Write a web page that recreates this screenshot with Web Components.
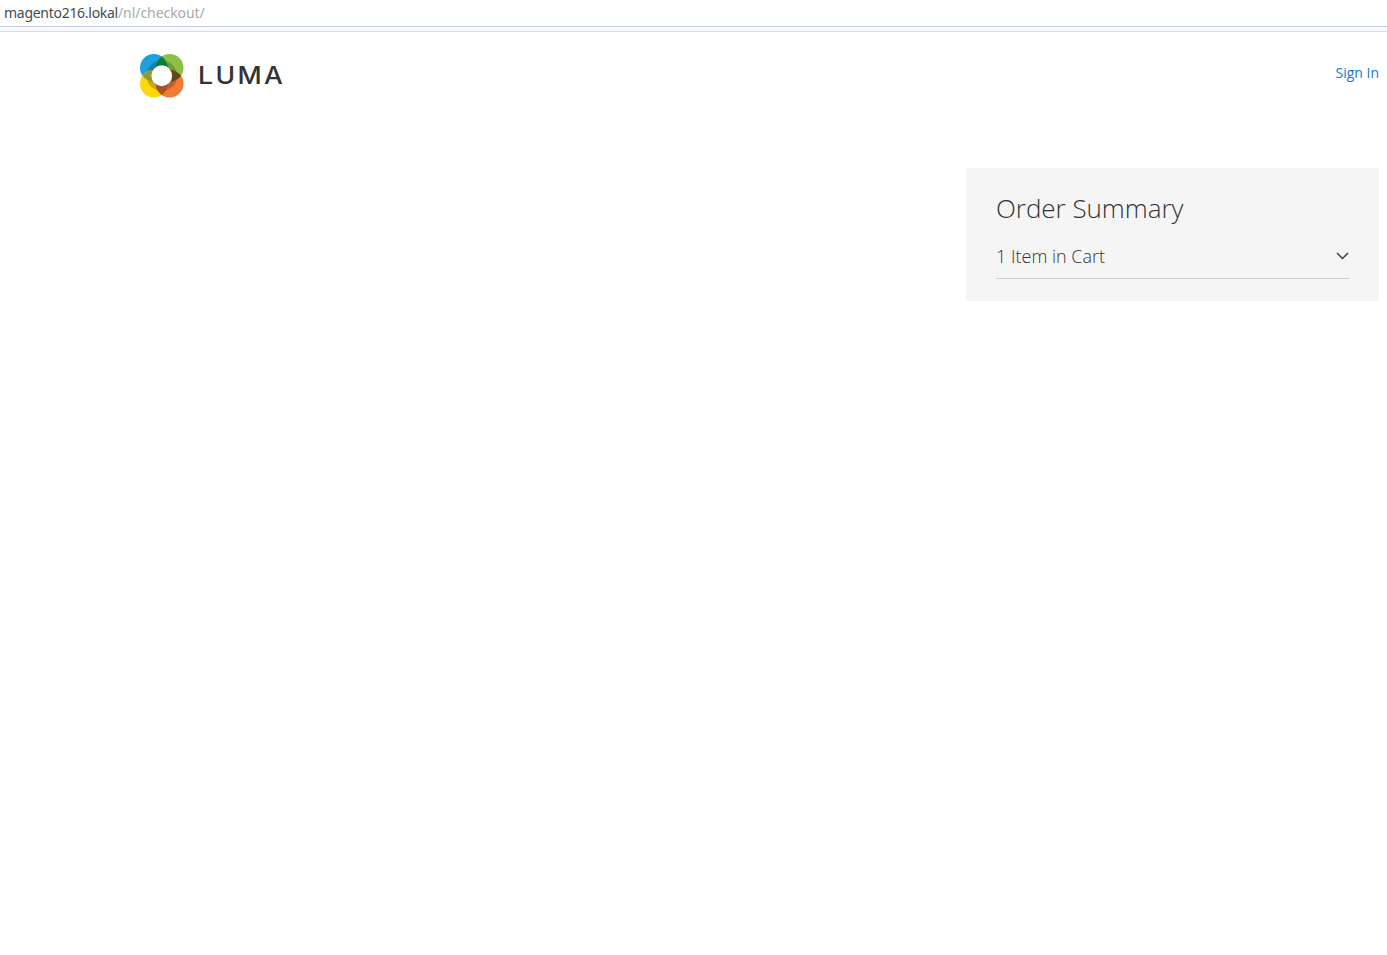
<!DOCTYPE html>
<html><head><meta charset="utf-8"><style>
html,body{margin:0;padding:0;background:#fff;height:100%}
body{font-family:"Open Sans",sans-serif;overflow:hidden}
</style></head><body>
<url-bar host-name="magento216.lokal" path="/nl/checkout/"></url-bar>
<page-header></page-header>
<checkout-main><order-summary title-text="Order Summary" count-text="1 Item in Cart"></order-summary></checkout-main>
<script>
function def(name,html,setup){customElements.define(name,class extends HTMLElement{connectedCallback(){if(this.shadowRoot)return;const r=this.attachShadow({mode:'open'});r.innerHTML=html;if(setup)setup(r,this)}})}
def('url-bar',`<style>:host{display:block;font:14px/25px "Noto Sans",sans-serif;color:#a9a9a9}
.u{height:26px;padding-left:4px;border-bottom:1px solid #c8d0e8}
.g{height:4px;background:#f6f8fd;border-bottom:1px solid #d9dbe0}
.h{color:#444b52;letter-spacing:-.28px}.p{letter-spacing:-.06px}</style><div class="u"><span class="h"></span><span class="p"></span></div><div class="g"></div>`,(r,e)=>{r.querySelector('.h').textContent=e.getAttribute('host-name');r.querySelector('.p').textContent=e.getAttribute('path')});
def('luma-logo',`<style>:host{display:flex;align-items:center;gap:14.5px}
svg{display:block}.t{display:inline-block;font:500 24px/1 Inter,sans-serif;color:#333;letter-spacing:2.2px;transform:scaleX(1.105);transform-origin:left center}</style>
<svg width="43.5" height="43.5" viewBox="0 0 44 44">
<circle cx="14" cy="14" r="14" fill="#1fa0dc"/><circle cx="30" cy="14" r="14" fill="#8cc044"/>
<circle cx="14" cy="30" r="14" fill="#fdd80f"/><circle cx="30" cy="30" r="14" fill="#f27a33"/>
<circle cx="22" cy="22" r="15.5" fill="#000" opacity=".2"/>
<path d="M22 2.5A14 14 0 0 1 22 25.5A14 14 0 0 1 22 2.5Z" fill="#0f7a3e"/>
<path d="M2.5 22A14 14 0 0 1 25.5 22A14 14 0 0 1 2.5 22Z" fill="#8e9a35"/>
<path d="M18.5 22A14 14 0 0 1 41.5 22A14 14 0 0 1 18.5 22Z" fill="#5b4a1d"/>
<path d="M22 18.5A14 14 0 0 1 22 41.5A14 14 0 0 1 22 18.5Z" fill="#a8502a"/>
<circle cx="22" cy="22" r="10.5" fill="#fff"/></svg><span class="t">LUMA</span>`);
def('page-header',`<style>:host{display:flex;justify-content:space-between;height:136px;padding:22px 8px 0 140px;box-sizing:border-box}
a{font:14px/20px "Open Sans",sans-serif;color:#1979c3;text-decoration:none;margin-top:9px}
luma-logo{align-self:flex-start}</style><luma-logo></luma-logo><a href="#">Sign In</a>`);
def('checkout-main',`<style>:host{display:flex;justify-content:flex-end;padding-right:8px}</style><slot></slot>`);
def('order-summary',`<style>:host{display:block;width:413px;height:133px;background:#f5f5f5;padding:22px 30px;box-sizing:border-box;color:#333}
.h{font:300 26px/36px "Open Sans",sans-serif;margin-bottom:18px;letter-spacing:-.04px}
.row{display:flex;justify-content:space-between;align-items:center;border-bottom:1px solid #ccc;font:300 18px/24px "Open Sans",sans-serif;padding-bottom:10px;height:24px;box-sizing:content-box}
svg{display:block}</style><div class="h"></div><div class="row"><span class="c"></span><svg width="13" height="8" viewBox="0 0 13 8" fill="none" stroke="#333" stroke-width="1.35"><path d="M1 1l5.5 5.5L12 1"/></svg></div>`,(r,e)=>{r.querySelector('.h').textContent=e.getAttribute('title-text');r.querySelector('.c').textContent=e.getAttribute('count-text')});
</script></body></html>
